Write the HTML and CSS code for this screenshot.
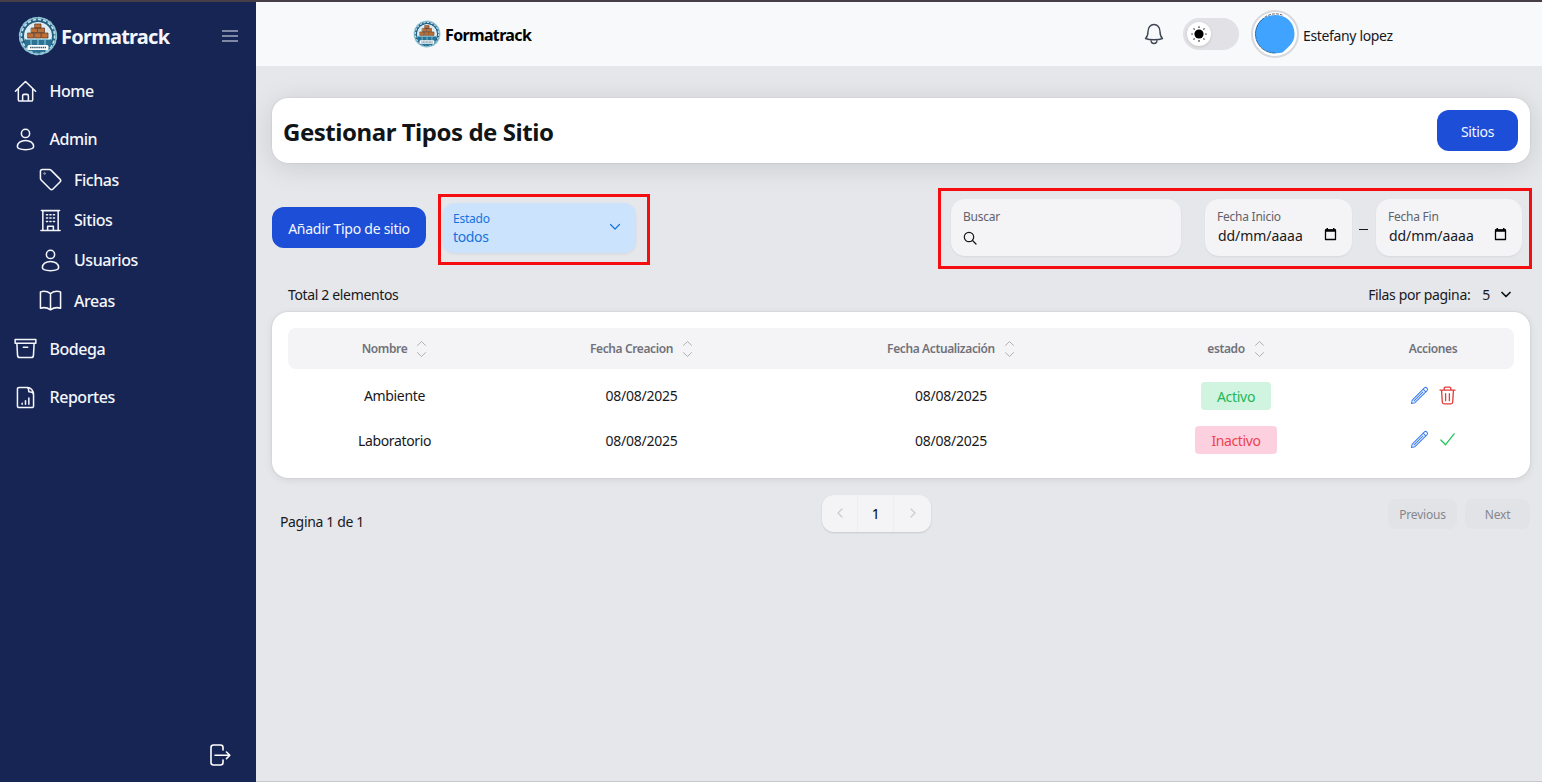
FILE: index.html
```html
<!DOCTYPE html>
<html lang="es">
<head>
<meta charset="utf-8">
<title>Formatrack</title>
<link rel="stylesheet" href="styles.css">
</head>
<body>
<svg class="defs" width="0" height="0">
  <symbol id="logo" viewBox="0 0 40 40">
    <circle cx="20" cy="20" r="17.500" fill="none" stroke="#8fc3d6" stroke-width="3.400" stroke-dasharray="3 2.500"/>
    <circle cx="20" cy="20" r="15.800" fill="none" stroke="#245f80" stroke-width="3.400"/>
    <circle cx="20" cy="20" r="16.600" fill="none" stroke="#b9dfeb" stroke-width="1.700" stroke-dasharray="2 3.220"/>
    <circle cx="20" cy="20" r="14" fill="#dceef5"/>
    <path d="M7 23h26v7q-6 7-13 7t-13-7z" fill="#2b7295"/>
    <g fill="#bd7137" stroke="#5b341e" stroke-width=".7"><path d="M17 8h6v4h-6zM13.500 12h6v4.500h-6zM20.500 12h6v4.500h-6zM10 17h6v5h-6zM17 17h6v5h-6zM24 17h6v5h-6z"/></g>
    <path d="M8 23.500h24M13 24v5M20 24v5M27 24v5" stroke="#84c3d8" stroke-width="1.200"/>
    <rect x="9.500" y="29" width="21" height="5" rx="1.500" fill="#fff"/>
    <path d="M12 31.500h16" stroke="#355769" stroke-width="1.400" stroke-dasharray="1.500 .6" stroke-linecap="butt"/>
  </symbol>
  <symbol id="user" viewBox="0 0 24 24"><circle cx="12" cy="5.700" r="4.300"/><path d="M3.500 19.400c0-3.600 3.500-6.400 8.500-6.400s8.500 2.800 8.500 6.400c0 2-3.700 3.200-8.500 3.200s-8.500-1.200-8.500-3.200z"/></symbol>
  <symbol id="sort" viewBox="0 0 12 20"><path d="M1.500 6 6 1.700 10.500 6M1.500 14 6 18.300 10.500 14"/></symbol>
  <symbol id="calendar" viewBox="0 0 13 14"><path d="M1.500 3h10v9.500h-10z" fill="none" stroke="#000" stroke-width="1.300"/><path d="M1 2.500h11v2.300H1zM2.500 1h1.500v2H2.500zM9 1h1.500v2H9z"/></symbol>
  <symbol id="pencil" viewBox="0 0 20 20"><path d="m1.500 18.500.9-3.700L15.200 2c1.700-1.500 4.300 1.100 2.800 2.800L5.200 17.600zM13.800 3.400l2.800 2.800M4.300 15.700 13.700 6.300"/></symbol>
</svg>
<div class="app">
  <aside class="sidebar">
    <div class="brand">
      <svg class="brand-logo"><use href="#logo"/></svg>
      <span class="brand-name">Formatrack</span>
      <svg class="burger" viewBox="0 0 16 12"><path d="M0 1h16M0 6h16M0 11h16"/></svg>
    </div>
    <nav class="nav">
      <a class="item"><svg viewBox="0 0 24 24"><path d="M1.500 11.800 12 1.500l10.500 10.300M4.500 9v11.500c0 .9.500 1.500 1.500 1.500h12c1 0 1.500-.6 1.500-1.500V9M9 22v-5.500c0-1 .5-1.500 1.500-1.500h3c1 0 1.500.5 1.500 1.500V22"/></svg><span>Home</span></a>
      <a class="item"><svg viewBox="0 0 24 24"><use href="#user"/></svg><span>Admin</span></a>
      <div class="subnav">
        <a class="item"><svg viewBox="0 0 24 24"><path d="M1.500 3.500c0-1.300.7-2 2-2h7.300c.7 0 1.200.2 1.700.7l9.400 9.400c1 1 1 2 0 3l-7.300 7.300c-1 1-2 1-3 0L2.200 12.500c-.5-.5-.7-1-.7-1.700z"/><circle cx="5.800" cy="5.800" r=".3"/></svg><span>Fichas</span></a>
        <a class="item"><svg viewBox="0 0 24 24"><path d="M2 22.500h20M4 22V1.800h16V22M2.500 1.500h19M9 22v-4h6v4"/><path d="M7.800 6h1.200M11.400 6h1.200M15 6h1.200M7.800 9.500h1.200M11.400 9.500h1.200M15 9.500h1.200M7.800 13h1.200M11.400 13h1.200M15 13h1.200"/></svg><span>Sitios</span></a>
        <a class="item"><svg viewBox="0 0 24 24"><use href="#user"/></svg><span>Usuarios</span></a>
        <a class="item"><svg viewBox="0 0 24 24"><path d="M12 4.800C9 2.500 5 2 1.500 3v17c3.500-1 7.500-.5 10.500 1.700 3-2.200 7-2.700 10.500-1.700V3C19 2 15 2.500 12 4.800zV21.500"/></svg><span>Areas</span></a>
      </div>
      <a class="item"><svg viewBox="0 0 24 24"><path d="M1.200 2.500h21.600v4H1.200zM3 6.500l.7 12.700c.1 1.500.8 2.300 2.300 2.300h12c1.500 0 2.200-.8 2.300-2.300L21 6.500M9.700 10.800h4.600"/></svg><span>Bodega</span></a>
      <a class="item"><svg viewBox="0 0 24 24"><path d="M14 1.500H5.500c-1 0-1.900.7-1.900 1.700v17.600c0 1 .9 1.700 1.900 1.700h13c1 0 1.900-.7 1.900-1.700V9c0-4-3-7.500-6.400-7.500 1.500 1.200 1.500 2.500 1.500 4.500 2.300 0 4.400.5 4.900 3M8.500 19v-1M12 19v-3.500M15.500 19v-6.500"/></svg><span>Reportes</span></a>
    </nav>
    <svg class="logout" viewBox="0 0 22 24"><path d="M14 7V4.500C14 2.800 13 2 11.500 2H4.500C2.800 2 2 3 2 4.500v15C2 21.200 2.900 22 4.500 22h7c1.700 0 2.500-1 2.500-2.500V17M6 12.300h14.500M17.500 9l3.300 3.300-3.300 3.300"/></svg>
  </aside>
  <div class="page">
    <header class="topbar">
      <svg class="top-logo"><use href="#logo"/></svg>
      <span class="top-name">Formatrack</span>
      <svg class="bell" viewBox="0 0 20 22"><path d="M1.500 15.500c2-1.800 2.500-4 2.500-7 0-4 2.500-7 6-7s6 3 6 7c0 3 .5 5.200 2.500 7-4 1.700-13 1.700-17 0zM7 17c0 2.200 1 3.500 3 3.500s3-1.300 3-3.500"/></svg>
      <div class="toggle"><div class="knob"><svg viewBox="0 0 16 16"><circle cx="8" cy="8" r="4.600"/><path d="M8 .8v.5M8 14.700v.5M.8 8h.5M14.700 8h.5M2.900 2.900l.3.300M12.800 12.800l.3.300M13.100 2.900l-.3.300M3.200 12.800l-.3.300" stroke="#000" stroke-width="1.200"/></svg></div></div>
      <svg class="avatar" viewBox="0 0 48 48"><circle cx="24" cy="24" r="23" fill="#fff" stroke="#d8d9de" stroke-width="2"/><path d="M24 5c11 0 19.500 7 19.500 19 0 9-6 13-12 18.500-14 3.500-27-5.500-27-18.500C4.500 12 13 5 24 5z" fill="#40a3ff"/><path d="M12.500 8.500A19 19 0 0 0 24 43" fill="none" stroke="#164d80" stroke-width=".8" stroke-dasharray="2 1"/><path d="M14 7a19 19 0 0 1 17-2" fill="none" stroke="#333" stroke-width=".8" stroke-dasharray="2 2"/></svg>
      <span class="user-name">Estefany lopez</span>
    </header>
    <main class="main">
      <section class="title-card"><h1>Gestionar Tipos de Sitio</h1><button class="btn btn-sites">Sitios</button></section>
      <section class="toolbar">
        <button class="btn btn-add">Añadir Tipo de sitio</button>
        <div class="mark mark-state">
          <div class="select"><div class="select-text"><span class="select-label">Estado</span><span class="select-value">todos</span></div><svg viewBox="0 0 12 8"><path d="m1.500 1.500 4.500 4.500 4.500-4.500"/></svg></div>
        </div>
        <div class="mark mark-search">
          <div class="field search"><span class="label">Buscar</span><svg viewBox="0 0 14 14"><circle cx="6" cy="6" r="4.700"/><path d="m9.500 9.500 3.500 3.500"/></svg></div>
          <div class="field date"><span class="label">Fecha Inicio</span><div class="date-row"><span>dd/mm/aaaa</span><svg><use href="#calendar"/></svg></div></div>
          <span class="dash"></span>
          <div class="field date date-end"><span class="label">Fecha Fin</span><div class="date-row"><span>dd/mm/aaaa</span><svg><use href="#calendar"/></svg></div></div>
        </div>
      </section>
      <div class="summary"><span>Total 2 elementos</span><div class="rows-select"><span class="rows-label">Filas por pagina:</span><span>5</span><svg viewBox="0 0 10 8"><path d="m1 1.500 4 4 4-4"/></svg></div></div>
      <section class="table-card">
        <div class="row head">
          <div>Nombre<svg><use href="#sort"/></svg></div><div>Fecha Creacion<svg><use href="#sort"/></svg></div><div>Fecha Actualización<svg><use href="#sort"/></svg></div><div>estado<svg><use href="#sort"/></svg></div><div>Acciones</div>
        </div>
        <div class="row">
          <div class="name">Ambiente</div><div class="num">08/08/2025</div><div class="num">08/08/2025</div><div><span class="chip active">Activo</span></div>
          <div class="actions"><svg class="edit"><use href="#pencil"/></svg><svg class="trash" viewBox="0 0 18 20"><path d="M1 4.300h16M5.500 4V2.500C5.500 1.700 6 1.200 7 1.200h4c1 0 1.500.5 1.500 1.300V4M2.700 4.500l.8 12.700c.1 1.100.7 1.600 1.800 1.600h7.400c1.100 0 1.700-.5 1.800-1.600l.8-12.700M7 8v7.500M11 8v7.500"/></svg></div>
        </div>
        <div class="row">
          <div class="name">Laboratorio</div><div class="num">08/08/2025</div><div class="num">08/08/2025</div><div><span class="chip inactive">Inactivo</span></div>
          <div class="actions"><svg class="edit"><use href="#pencil"/></svg><svg class="check" viewBox="0 0 18 20"><path d="m2 10.500 5 5L16 4"/></svg></div>
        </div>
      </section>
      <footer class="foot">
        <span class="page-text">Pagina 1 de 1</span>
        <div class="pager"><span><svg viewBox="0 0 8 10"><path d="M6 1 2 5l4 4"/></svg></span><span class="current">1</span><span><svg viewBox="0 0 8 10"><path d="m2 1 4 4-4 4"/></svg></span></div>
        <div class="pn"><button class="prev">Previous</button><button class="next">Next</button></div>
      </footer>
    </main>
  </div>
</div>
</body>
</html>
```
FILE: styles.css
```css
* { box-sizing: border-box; }
body { margin: 0; font: 14px/20px "Noto Sans", "Open Sans", sans-serif; color: #18181b; letter-spacing: -.35px; }
.defs { position: absolute; }
svg { display: block; flex: none; fill: none; stroke-linecap: round; stroke-linejoin: round; }
button { border: 0; font: inherit; letter-spacing: inherit; padding: 0; }
.app { display: flex; width: 1542px; height: 782px; border-top: 2px solid #473e48; overflow: hidden; background: #e5e7eb; }
.sidebar { width: 255.5px; background: #172554; color: #f4f6fb; display: flex; flex-direction: column; }
.brand { display: flex; align-items: center; height: 64px; padding: 4px 18px 0; }
.brand-logo { width: 40px; height: 40px; }
.brand-name { margin-left: 3px; padding-top: 2px; font-size: 20px; font-weight: 700; letter-spacing: -.75px; }
.burger { width: 16px; height: 12px; margin-left: auto; stroke: #e8ebf4; stroke-width: 1.2; }
.nav { padding: 5px 14px; }
.item { display: flex; align-items: center; gap: 12.5px; height: 40.3px; margin-bottom: 8px; font-size: 16px; font-weight: 500; letter-spacing: -.45px; }
.item svg { width: 23px; height: 23px; stroke: #f4f6fb; stroke-width: 1.6; }
.subnav { padding-left: 24.5px; margin: -8px 0 8px; }
.subnav .item { margin: 0; }
.logout { width: 22px; height: 24px; stroke: #fff; stroke-width: 1.6; margin: auto 25px 15px auto; }
.page { flex: 1; display: flex; flex-direction: column; border-bottom: 1px solid #c5c8cf; }
.topbar { height: 64px; background: #f8f9fb; display: flex; align-items: center; padding-left: 157.5px; }
.top-logo { width: 28px; height: 28px; }
.top-name { margin-left: 4px; padding-top: 2px; width: 100px; font-size: 16px; font-weight: 700; color: #000; letter-spacing: -.65px; }
.bell { width: 20px; height: 22px; margin-left: 599px; stroke: #3f4653; stroke-width: 1.4; }
.toggle { width: 56px; height: 32px; margin-left: 19px; border-radius: 16px; background: #e1e1e6; padding: 4px; }
.knob { width: 24px; height: 24px; border-radius: 50%; background: #fff; box-shadow: 0 1px 3px #0002; display: grid; place-items: center; }
.knob svg { width: 16px; height: 16px; fill: #000; }
.avatar { width: 48px; height: 48px; margin-left: 12px; }
.user-name { margin-left: 4px; padding-top: 3px; }
.main { padding: 32px 12px 0 16.5px; }
.title-card { height: 65px; background: #fff; border-radius: 16px; padding: 0 12px; display: flex; align-items: center; justify-content: space-between; box-shadow: 0 4px 28px #0000001f, 0 0 2px #0002; }
h1 { margin: 0 0 0 -1px; padding-top: 2px; font-size: 24px; line-height: 32px; font-weight: 700; color: #111517; letter-spacing: -.46px; }
.btn { height: 41px; border-radius: 12px; background: #1d4ed8; color: #f4f7ff; padding-top: 2px; }
.btn-sites { width: 81px; }
.btn-add { width: 154px; margin-top: 19px; letter-spacing: -.26px; }
.toolbar { display: flex; align-items: flex-start; margin: 25px -2px 0 0; height: 81px; }
.mark { border: 3px solid #f60d10; display: flex; }
.mark-state { width: 212px; height: 71px; margin: 6px 0 0 12px; padding: 6px 0 0 2px; }
.select { width: 193px; height: 50px; border-radius: 12px; background: #cce3fd; color: #1673de; display: flex; align-items: center; justify-content: space-between; padding: 0 15px 0 10px; box-shadow: 0 1px 3px #0001; }
.select-text { display: flex; flex-direction: column; line-height: 18px; }
.select-label, .label { font-size: 12px; letter-spacing: -.24px; }
.select svg { width: 12px; height: 8px; margin-bottom: 2px; stroke: #1673de; stroke-width: 1.2; }
.mark-search { width: 594px; height: 81px; margin-left: auto; padding: 8px 0 0 10px; align-items: flex-start; }
.field { height: 57px; border-radius: 14px; background: #f4f4f6; padding: 8.5px 12px; box-shadow: 0 1px 2px #0001; display: flex; flex-direction: column; }
.label { line-height: 17px; color: #62626b; white-space: nowrap; }
.search { width: 230px; }
.search svg { width: 14px; height: 14px; margin-top: 6px; stroke: #18181b; stroke-width: 1.2; }
.date { width: 147px; margin-left: 24px; }
.date-row { display: flex; align-items: center; justify-content: space-between; padding: 1px 3px 0 1px; letter-spacing: -.05px; }
.date-row svg { width: 13px; height: 14px; margin-bottom: 4px; fill: #000; }
.dash { width: 9px; height: 1px; background: #18181b; margin: 30px 8px 0 7px; }
.date-end { margin: 0; width: 146px; }
.summary { display: flex; justify-content: space-between; align-items: center; margin: 16px 19px 7px 16px; height: 20px; }
.rows-select { display: flex; align-items: center; }
.rows-label { margin-right: 12px; }
.rows-select svg { width: 10px; height: 8px; margin-left: 11px; stroke: #111; stroke-width: 1.7; }
.table-card { height: 166px; background: #fff; border-radius: 16px; padding: 16px; box-shadow: 0 2px 8px #00000014, 0 0 2px #0002; }
.row { display: grid; grid-template-columns: 213px 281px 338px 232px 162px; height: 44.5px; align-items: center; }
.row > div { display: flex; align-items: center; justify-content: center; white-space: nowrap; }
.head { height: 41px; margin-bottom: 4.5px; border-radius: 8px; background: #f4f4f6; color: #71717a; font-size: 12px; font-weight: 600; letter-spacing: -.38px; padding-top: 1px; }
.head svg { width: 11px; height: 18px; margin: -1px 0 0 9px; stroke: #a8a8ae; stroke-width: 1; }
.row > .num { letter-spacing: -.25px; padding-top: 1px; }
.row > .name { padding-top: 1px; }
.chip { height: 28px; border-radius: 4px; padding: 5px 16px; letter-spacing: -.3px; }
.inactive { letter-spacing: -.4px; }
.active { background: #d1f4e0; color: #22b857; }
.inactive { background: #fdd0df; color: #ec4350; }
.row > .actions { gap: 10px; padding: 0 1px 1px 0; }
.edit { width: 19px; height: 19px; stroke: #3b7cf0; stroke-width: 1.1; }
.trash, .check { width: 17px; height: 19px; stroke: #e23c3c; stroke-width: 1.4; }
.check { stroke: #22c55e; }
.foot { display: grid; grid-template-columns: 550px 109px 1fr; margin-top: 16.5px; }
.page-text { padding: 17px 8px 0; }
.pager { height: 37px; display: grid; grid-template-columns: 35px 37px 37px; border-radius: 12px; background: #f4f4f6; box-shadow: 0 1px 2px #0002; }
.pager span { display: grid; place-items: center; }
.pager svg { width: 8px; height: 10px; stroke: #cbcbd0; stroke-width: 1.2; }
.pager .current { border: solid #eeeef1; border-width: 0 1px; color: #000; padding-top: 1px; }
.pn { display: flex; justify-content: flex-end; gap: 8px; padding-top: 4px; }
.pn button { height: 30px; border-radius: 8px; background: #e2e3e7; color: #85868d; font-size: 12px; letter-spacing: -.2px; padding-top: 2px; }
.prev { width: 69px; }
.next { width: 65px; }
```
